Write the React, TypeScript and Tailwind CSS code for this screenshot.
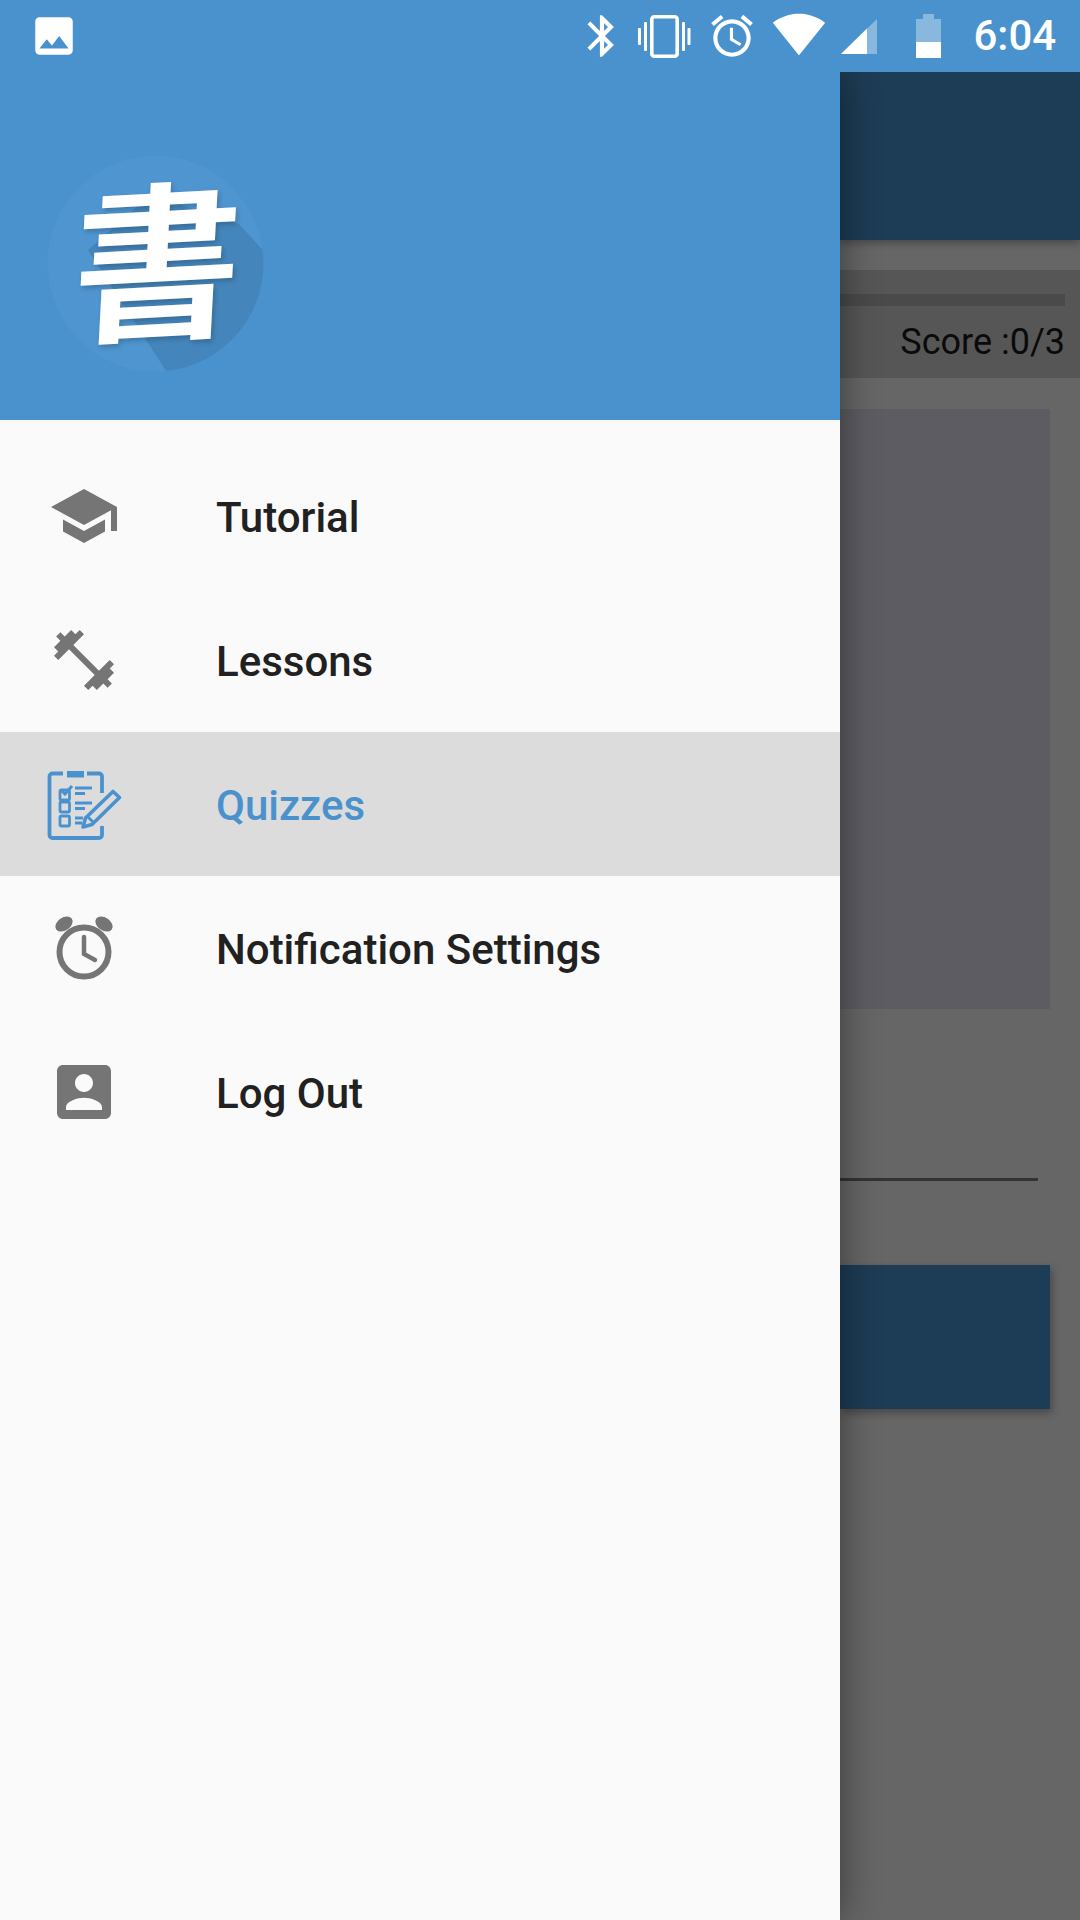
const Ic = ({ d, className }: { d: string; className: string }) => (
  <svg viewBox="0 0 24 24" className={className} fill="currentColor"><path d={d} /></svg>
);

const ClipIcon = () => (
  <svg viewBox="45 766 80 76" className="w-[80px] h-[76px] -ml-[3px] -mt-[1px]" fill="none" stroke="#4a92cf">
    <path d="M63 772.500H52.500a3 3 0 0 0-3 3V834a3 3 0 0 0 3 3H99a3 3 0 0 0 3-3V825" strokeWidth="3.800" />
    <path d="M87 772.500H99a3 3 0 0 1 3 3V792" strokeWidth="3.800" />
    <rect x="67" y="770" width="17" height="6.500" fill="#4a92cf" stroke="none" />
    <rect x="60" y="789" width="9.500" height="10" rx="1.500" strokeWidth="2.800" />
    <path d="M61 789l4 4 7-8" strokeWidth="3" />
    <rect x="60" y="801" width="9.500" height="10" rx="1.500" strokeWidth="2.800" />
    <rect x="60" y="815" width="9.500" height="10" rx="1.500" strokeWidth="2.800" />
    <path d="M75 787h17M75 792.500h10M75 802h17M75 807.500h10M75 817h8M75 822h7" strokeWidth="2.800" />
    <path d="M83 826l2.500-9 27.500-26.500 6.500 6-27.500 27z" strokeWidth="3.600" strokeLinejoin="round" />
    <path d="M87 815l6 6" strokeWidth="3" />
  </svg>
);

const AlarmIcon = () => (
  <svg viewBox="0 0 72 72" className="w-[72px] h-[72px]" fill="none" stroke="#757575">
    <circle cx="36" cy="40" r="24.500" strokeWidth="6" />
    <path d="M36 25v17l11 6" strokeWidth="4.500" strokeLinecap="round" />
    <ellipse cx="16" cy="12" rx="9.500" ry="6.500" transform="rotate(-35 16 12)" fill="#757575" stroke="none" />
    <ellipse cx="56" cy="12" rx="9.500" ry="6.500" transform="rotate(35 56 12)" fill="#757575" stroke="none" />
  </svg>
);

const P = {
  school: "M5 13.18v4L12 21l7-3.82v-4L12 17l-7-3.82zM12 3L1 9l11 6 9-4.91V17h2V9L12 3z",
  fit: "M20.57 14.86L22 13.43 20.57 12 17 15.57 8.43 7 12 3.43 10.57 2 9.14 3.43 7.71 2 5.57 4.14 4.14 2.71 2.71 4.14l1.43 1.43L2 7.71l1.43 1.43L2 10.57 3.43 12 7 8.43 15.57 17 12 20.57 13.43 22l1.43-1.43L16.29 22l2.14-2.14 1.43 1.43 1.43-1.43-1.43-1.43L22 16.29z",
  person: "M3 5v14c0 1.1.89 2 2 2h14c1.1 0 2-.9 2-2V5c0-1.1-.9-2-2-2H5c-1.11 0-2 .9-2 2zm12 4c0 1.66-1.34 3-3 3s-3-1.34-3-3 1.34-3 3-3 3 1.34 3 3zm-9 8c0-2 4-3.1 6-3.1s6 1.1 6 3.1v1H6v-1z",
  photo: "M21 19V5c0-1.1-.9-2-2-2H5c-1.1 0-2 .9-2 2v14c0 1.1.9 2 2 2h14c1.1 0 2-.9 2-2zM8.5 13.5l2.5 3.01L14.5 12l4.5 6H5l3.5-4.5z",
  bt: "M17.71 7.71L12 2h-1v7.59L6.41 5 5 6.41 10.59 12 5 17.59 6.41 19 11 14.41V22h1l5.71-5.71-4.3-4.29 4.3-4.29zM13 5.83l1.88 1.88L13 9.59V5.83zm1.88 10.46L13 18.17v-3.76l1.88 1.88z",
  alarm: "M22 5.72l-4.6-3.86-1.29 1.53 4.6 3.86L22 5.72zM7.88 3.39L6.6 1.86 2 5.71l1.29 1.53 4.59-3.85zM12.5 8H11v6l4.75 2.85.75-1.23-4-2.37V8zM12 4c-4.97 0-9 4.03-9 9s4.03 9 9 9c4.97 0 9-4.03 9-9s-4.03-9-9-9zm0 16c-3.87 0-7-3.13-7-7s3.13-7 7-7 7 3.13 7 7-3.13 7-7 7z",
  wifi: "M12.01 21.49L23.64 7c-.45-.34-4.93-4-11.64-4C5.28 3 .81 6.66.36 7l11.64 14.5.01-.01z",
};

const items = [
  { label: "Tutorial", icon: <Ic d={P.school} className="w-[72px] h-[72px] text-[#757575]" /> },
  { label: "Lessons", icon: <Ic d={P.fit} className="w-[72px] h-[72px] text-[#757575]" /> },
  { label: "Quizzes", icon: <ClipIcon />, active: true },
  { label: "Notification Settings", icon: <AlarmIcon /> },
  { label: "Log Out", icon: <Ic d={P.person} className="w-[72px] h-[72px] text-[#757575]" /> },
];

export default function App() {
  return (
    <div className="w-[1080px] h-[1920px] overflow-hidden flex flex-col bg-[#666666] font-['Roboto',sans-serif]">
      <header className="relative z-20 h-[72px] shrink-0 bg-[#4a92cd] flex items-center text-white">
        <Ic d={P.photo} className="w-[50px] h-[50px] ml-[29px]" />
        <Ic d={P.bt} className="w-[50px] h-[50px] ml-[498px]" />
        <svg viewBox="0 0 52.5 43" className="w-[52.5px] h-[43px] ml-[11px]" fill="currentColor">
          <rect x="0" y="13" width="3" height="17" rx="1" />
          <rect x="6" y="7" width="3" height="29" rx="1" />
          <rect x="13.8" y="1.8" width="25.4" height="39.4" rx="2.5" fill="none" stroke="currentColor" strokeWidth="3.6" />
          <rect x="44" y="7" width="3" height="29" rx="1" />
          <rect x="49.5" y="13" width="3" height="17" rx="1" />
        </svg>
        <Ic d={P.alarm} className="w-[50px] h-[50px] ml-[16px]" />
        <Ic d={P.wifi} className="w-[54px] h-[54px] ml-[15px] -mt-[4px]" />
        <svg viewBox="0 0 37 37" className="w-[37px] h-[37px] ml-[15px] mt-[1px]" fill="currentColor">
          <path d="M0 36L36 1v35z" opacity="0.35" />
          <path d="M0 36L26 10.5V36z" />
        </svg>
        <svg viewBox="0 0 25 44" className="w-[25px] h-[44px] ml-[38px]" fill="currentColor">
          <path d="M7 0h11v5h7v23H0V5h7z" opacity="0.35" />
          <rect y="28" width="25" height="16" />
        </svg>
        <span className="ml-[33px] text-[42px] leading-none font-medium">6:04</span>
      </header>

      <div className="flex flex-1 min-h-0">
        <aside className="relative z-10 w-[840px] shrink-0 bg-[#fafafa] shadow-[0_0_36px_rgba(0,0,0,0.45)] flex flex-col">
          <div className="h-[348px] shrink-0 bg-[#4a92cd] pl-[47px] pt-[83px]">
            <div className="relative w-[217px] h-[217px]">
              <svg viewBox="47 155 217 217" className="w-[217px] h-[217px]">
                <defs>
                  <clipPath id="logoClip"><circle cx="155.5" cy="263.5" r="108" /></clipPath>
                </defs>
                <circle cx="155.5" cy="263.5" r="108" fill="#4f95cf" />
                <polygon clipPath="url(#logoClip)" points="239,224 270,258 270,380 172,380 88,250 150,195" fill="#4485bb" />
              </svg>
              <span className="absolute left-[27px] top-[14px] text-[168px] leading-none font-bold text-white font-['Noto_Sans_CJK_JP',sans-serif] -skew-x-6 -rotate-3 [text-shadow:2px_3px_5px_rgba(0,0,0,0.2)]">書</span>
            </div>
          </div>
          <nav className="flex flex-col pt-[24px]">
            {items.map((it) => (
              <div key={it.label} className={`h-[144px] flex items-center pl-[48px] ${it.active ? "bg-[#dcdcdc]" : ""}`}>
                <div className="w-[72px] h-[72px] shrink-0">{it.icon}</div>
                <span className={`ml-[96px] pt-[3px] text-[42px] font-medium leading-none ${it.active ? "text-[#4a92cd]" : "text-[#212121]"}`}>{it.label}</span>
              </div>
            ))}
          </nav>
        </aside>

        <main className="flex-1 min-w-0 flex flex-col">
          <div className="h-[168px] bg-[#1d3c55] shadow-[0_3px_8px_rgba(0,0,0,0.3)]" />
          <div className="mt-[30px] h-[108px] bg-[#565656] pt-[24px] pr-[15px]">
            <div className="h-[12px] bg-[#4a4a4a]" />
            <div className="mt-[16px] text-right text-[36px] leading-[40px] text-[#0a0a0a]">Score :0/3</div>
          </div>
          <div className="mt-[31px] h-[600px] mr-[30px] bg-[#5c5c62]" />
          <div className="mt-[169px] h-[3px] mr-[42px] bg-[#333333]" />
          <div className="mt-[84px] h-[144px] mr-[30px] bg-[#1d3c55] shadow-[2px_4px_8px_rgba(0,0,0,0.3)]" />
        </main>
      </div>
    </div>
  );
}
